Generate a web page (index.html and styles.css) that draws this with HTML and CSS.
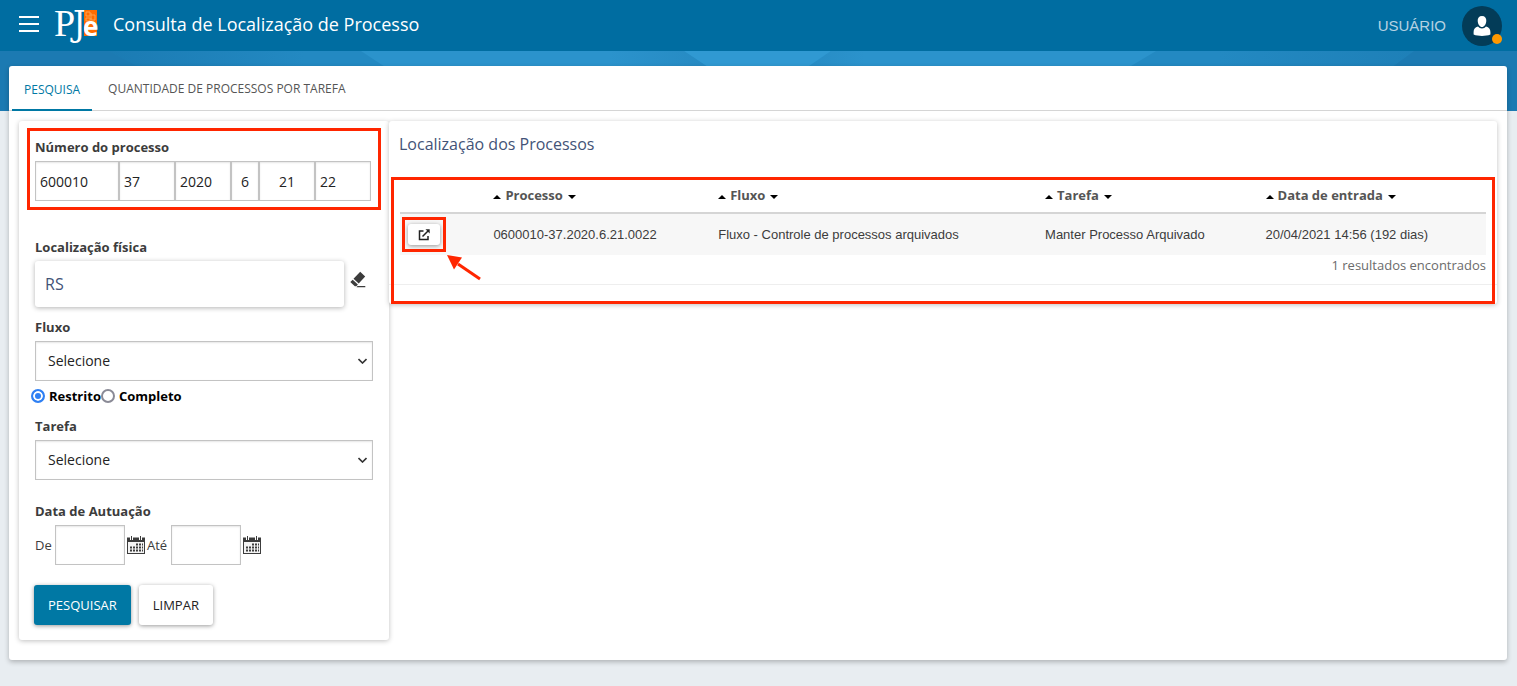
FILE: index.html
```html
<!DOCTYPE html>
<html lang="pt-BR">
<head>
<meta charset="utf-8">
<title>Consulta de Localização de Processo</title>
<link rel="stylesheet" href="styles.css">
</head>
<body>
<header class="topbar">
  <button class="menu-button" type="button" aria-label="Menu"><span></span><span></span><span></span></button>
  <svg class="logo" width="48" height="50" viewBox="-1 -7 48 50" role="img" aria-label="PJe">
    <rect x="30" y="2" width="13" height="26" fill="#ff6c00"/>
    <path d="M32 4h4v4h-4zM37 7h4v5h-4zM32 10h4v3h-4zM36 6h2M36 11h2" fill="none" stroke="#ffa04d"/>
    <text class="logo-p" x="0" y="28">P</text>
    <text class="logo-j" x="19" y="28">J</text>
    <text class="logo-e" x="29" y="28">e</text>
  </svg>
  <h1 class="page-title">Consulta de Localização de Processo</h1>
  <span class="user-name">USUÁRIO</span>
  <button class="avatar" type="button" aria-label="Perfil do usuário">
    <svg width="18" height="20" viewBox="0 0 18 20" aria-hidden="true">
      <path d="M9 0c3 0 4.500 2 4.300 5C13 8.500 11.200 11 9 11S5 8.500 4.700 5C4.500 2 6 0 9 0zM5 10.500c1 1.300 2.400 2 4 2s3-.7 4-2c3 .7 4.400 2.500 4.400 5.500v2.600C15 19.700 12 20 9 20s-6-.3-8.400-1.400V16c0-3 1.400-4.800 4.400-5.500z" fill="#fff"/>
    </svg>
    <span class="status"></span>
  </button>
</header>
<div class="hero">
  <svg class="hero-art" viewBox="0 0 1517 60" preserveAspectRatio="none" aria-hidden="true">
    <defs>
      <linearGradient id="a"><stop offset="0" stop-color="#1b7bb3"/><stop offset=".15" stop-color="#2389c2"/><stop offset=".85" stop-color="#2389c2"/><stop offset="1" stop-color="#1e80b8"/></linearGradient>
      <linearGradient id="b"><stop offset="0" stop-color="#2b93cc"/><stop offset=".6" stop-color="#2b93cc"/><stop offset="1" stop-color="#2384bc"/></linearGradient>
      <linearGradient id="c"><stop offset="0" stop-color="#2384bc"/><stop offset=".3" stop-color="#2b93cc"/><stop offset="1" stop-color="#2b93cc"/></linearGradient>
    </defs>
    <path d="M0 0h1517v60H0z" fill="#1c7ab2"/>
    <path d="M108 0h1306l-82 60H224z" fill="url(#a)"/>
    <path d="M361 0h323l90 60H452z" fill="url(#b)"/>
    <path d="M831 0h325l-100 60H740z" fill="url(#c)"/>
    <path d="M684 0h147l-88 60h31z" fill="#3099d2"/>
  </svg>
</div>
<main class="card">
  <nav class="tabs">
    <a class="tab tab-active" href="#pesquisa">PESQUISA</a>
    <a class="tab" href="#quantidade">QUANTIDADE DE PROCESSOS POR TAREFA</a>
  </nav>
  <div class="columns">
    <form class="panel search">
      <div class="process-number">
        <fieldset class="field">
          <legend class="label">Número do processo</legend>
          <div class="number-row">
            <input class="input n-seq" type="text" value="600010" aria-label="Número sequencial">
            <input class="input n-mid" type="text" value="37" aria-label="Dígito verificador">
            <input class="input n-mid" type="text" value="2020" aria-label="Ano">
            <input class="input n-small" type="text" value="6" aria-label="Ramo da justiça">
            <input class="input n-mid centered" type="text" value="21" aria-label="Tribunal">
            <input class="input n-mid" type="text" value="22" aria-label="Origem">
          </div>
        </fieldset>
        <span class="mark mark-number"></span>
      </div>
      <div class="field place">
        <label class="label" for="local">Localização física</label>
        <div class="place-row">
          <input class="place-input" id="local" type="text" value="RS">
          <button class="icon-button eraser" type="button" aria-label="Limpar localização">
            <svg width="16" height="17" viewBox="0 0 16 17" aria-hidden="true"><path d="M10.200.8l5 4.800-6.500 7L3.500 7.800zM2.700 8.700l5.200 4.900-1.500 1.600H4.800L.3 11.100zM7.500 15h7.800v1.200H6.500z" fill="#3c3c3c"/></svg>
          </button>
        </div>
      </div>
      <div class="field flow">
        <label class="label" for="fluxo">Fluxo</label>
        <div class="select-wrap">
          <select class="input select" id="fluxo"><option>Selecione</option></select>
          <svg class="chevron" width="9" height="6" viewBox="0 0 9 6" aria-hidden="true"><path d="M.5 1l4 4 4-4" fill="none" stroke="#333" stroke-width="1.600"/></svg>
        </div>
      </div>
      <div class="radios">
        <label class="radio-label"><input class="radio" type="radio" name="modo" checked>Restrito</label>
        <label class="radio-label"><input class="radio" type="radio" name="modo">Completo</label>
      </div>
      <div class="field task">
        <label class="label" for="tarefa">Tarefa</label>
        <div class="select-wrap">
          <select class="input select" id="tarefa"><option>Selecione</option></select>
          <svg class="chevron" width="9" height="6" viewBox="0 0 9 6" aria-hidden="true"><path d="M.5 1l4 4 4-4" fill="none" stroke="#333" stroke-width="1.600"/></svg>
        </div>
      </div>
      <fieldset class="field dates">
        <legend class="label">Data de Autuação</legend>
        <svg class="symbols" aria-hidden="true"><symbol id="calendar" viewBox="0 0 18 18">
          <rect x=".5" y="3.500" width="17" height="14" fill="#f4f4f4" stroke="#3c3c3c"/>
          <path d="M0 1.500h18V6H0z" fill="#3c3c3c"/>
          <path d="M4.500 0v4M13.500 0v4" stroke="#fff" stroke-width="3"/>
          <path d="M4.500 0v4M13.500 0v4" stroke="#3c3c3c"/>
          <path d="M9 8.500h7M3 11.500h13M3 14.500h13" stroke="#3c3c3c" stroke-width="2" stroke-dasharray="2 1"/>
        </symbol></svg>
        <div class="date-row">
          <label class="date-from" for="de">De</label>
          <input class="input date" id="de" type="text">
          <button class="icon-button" type="button" aria-label="Calendário inicial"><svg width="18" height="18"><use href="#calendar"/></svg></button>
          <label class="date-to" for="ate">Até</label>
          <input class="input date" id="ate" type="text">
          <button class="icon-button" type="button" aria-label="Calendário final"><svg width="18" height="18"><use href="#calendar"/></svg></button>
        </div>
      </fieldset>
      <div class="actions">
        <button class="button primary" type="button">PESQUISAR</button>
        <button class="button" type="button">LIMPAR</button>
      </div>
    </form>
    <section class="panel results">
      <h2 class="results-title">Localização dos Processos</h2>
      <div class="results-body">
        <table class="table">
          <colgroup><col class="c-open"><col class="c-process"><col class="c-flow"><col class="c-task"><col class="c-date"></colgroup>
          <thead>
            <tr>
              <td></td>
              <th><span class="up"></span>Processo<span class="down"></span></th>
              <th><span class="up"></span>Fluxo<span class="down"></span></th>
              <th><span class="up"></span>Tarefa<span class="down"></span></th>
              <th><span class="up"></span>Data de entrada<span class="down"></span></th>
            </tr>
          </thead>
          <tbody>
            <tr>
              <td>
                <div class="open-wrap">
                  <button class="open-button" type="button" aria-label="Abrir processo">
                    <svg width="12" height="12" viewBox="0 0 12 12" aria-hidden="true"><path d="M5.500 2H1.500v8.500H10V7M4.500 7.500L10 2" fill="none" stroke="#222" stroke-width="1.500"/><path d="M7.500.3h4.200v4.200z" fill="#222"/></svg>
                  </button>
                  <span class="mark mark-open"></span>
                  <svg class="arrow" width="36" height="28" viewBox="0 0 36 28" aria-hidden="true"><path d="M12 9l22 15" stroke="#ff2600" stroke-width="3"/><path d="M1 0l15 2.500-8 12z" fill="#ff2600"/></svg>
                </div>
              </td>
              <td>0600010-37.2020.6.21.0022</td>
              <td>Fluxo - Controle de processos arquivados</td>
              <td>Manter Processo Arquivado</td>
              <td>20/04/2021 14:56 (192 dias)</td>
            </tr>
          </tbody>
        </table>
        <p class="count">1 resultados encontrados</p>
        <div class="results-footer"></div>
        <span class="mark mark-results"></span>
      </div>
    </section>
  </div>
</main>
</body>
</html>
```

FILE: styles.css
```css
* { box-sizing: border-box; }

body {
  margin: 0;
  background: #e8edf1;
  color: #3c3c3c;
  font: 13px/20px "Open Sans", "Noto Sans", sans-serif;
}

button, input, select { font: inherit; color: inherit; }
button { cursor: pointer; }
svg { display: block; }
fieldset { border: 0; padding: 0; margin: 0; min-width: 0; }
legend { padding: 0; }

/* Top bar */
.topbar {
  display: flex;
  align-items: center;
  height: 51px;
  padding: 0 15px 0 19px;
  background: #006da1;
  color: #fff;
}
.menu-button {
  display: flex;
  flex-direction: column;
  gap: 5px;
  width: 20px;
  padding: 0;
  margin-bottom: 3px;
  border: 0;
  background: none;
}
.menu-button span { height: 2px; background: #fff; }
.logo { margin-left: 14px; overflow: visible; }
.logo text { fill: #fff; }
.logo-p { font: 38px "Liberation Serif", serif; }
.logo-j { font: 35px "DejaVu Serif Condensed", "DejaVu Serif", serif; }
.logo-e { font: bold 26px "Open Sans", sans-serif; }
.page-title {
  margin: 0 0 3px 12px;
  font-size: 18px;
  line-height: 24px;
  font-weight: 400;
}
.user-name {
  margin-left: auto;
  color: #b5d2e2;
  font: 15px/20px "Liberation Sans", Arial, sans-serif;
}
.avatar {
  position: relative;
  display: grid;
  place-items: center;
  width: 40px;
  height: 40px;
  margin-left: 16px;
  padding: 0;
  border: 0;
  border-radius: 50%;
  background: #033c58;
}
.status {
  position: absolute;
  right: 0;
  bottom: 2px;
  width: 10px;
  height: 10px;
  border-radius: 50%;
  background: #ff9800;
}

.hero { height: 60px; }
.hero-art { width: 100%; height: 60px; }

/* Main card */
.card {
  position: relative;
  margin: -45px 10px 26px 9px;
  border-radius: 3px;
  background: #fff;
  box-shadow: 0 2px 5px rgba(0, 0, 0, .25);
}
.tabs {
  display: flex;
  height: 45px;
  padding-left: 3px;
  border-bottom: 1px solid #d5d5d5;
  font-size: 12px;
}
.tab {
  height: 45px;
  padding: 13px 16px;
  color: #555;
  text-decoration: none;
}
.tab-active {
  padding: 14px 12px 9px;
  border-bottom: 2px solid #0078a4;
  color: #0078a4;
}
.columns {
  display: flex;
  align-items: flex-start;
  padding: 10px 10px 20px;
}
.panel {
  border-radius: 3px;
  background: #fff;
  box-shadow: 0 1px 5px rgba(0, 0, 0, .25);
}

/* Search form */
.search { flex: 0 0 370px; padding: 16px 16px 15px; }
.label { display: block; margin-bottom: 4px; font-weight: 700; }
.input {
  height: 40px;
  padding: 0 4px;
  border: 1px solid #c3c3c3;
  border-radius: 0;
  background: #fff;
  box-shadow: inset 0 1px 2px rgba(0, 0, 0, .1);
  color: #222;
  font-size: 14px;
}
.process-number { position: relative; }
.number-row { display: flex; }
.n-seq { width: 84px; }
.n-mid { width: 56px; }
.n-small { width: 28px; padding: 0; text-align: center; }
.centered { text-align: center; }
.place { margin-top: 36px; }
.place-row { display: flex; gap: 6px; align-items: flex-start; }
.place-input {
  flex: 1;
  min-width: 0;
  height: 46px;
  padding: 0 10px;
  border: 0;
  border-radius: 3px;
  box-shadow: 0 1px 5px rgba(0, 0, 0, .3);
  color: #435377;
  font-size: 16px;
}
.icon-button { padding: 0; border: 0; background: none; }
.eraser { margin: 10px 7px 0 0; }
.flow, .task { margin-top: 10px; }
.select-wrap { position: relative; }
.select {
  display: block;
  width: 100%;
  padding: 0 12px;
  appearance: none;
}
.chevron {
  position: absolute;
  right: 6px;
  top: 17px;
  pointer-events: none;
}
.radios {
  display: flex;
  margin: 5px 0 0 -4px;
  color: #000;
  font-weight: 700;
}
.radio-label { display: flex; align-items: center; gap: 4px; }
.radio {
  appearance: none;
  width: 14px;
  height: 14px;
  margin: 0;
  border: 2px solid #8a8a96;
  border-radius: 50%;
  background: #fff;
}
.radio:checked {
  border-color: #2f80f3;
  background: #2f80f3;
  box-shadow: inset 0 0 0 2px #fff;
}
.dates { margin-top: 21px; }
.symbols { position: absolute; width: 0; height: 0; }
.date-row { display: flex; align-items: center; }
.date-from { width: 20px; }
.date-to { width: 24px; }
.date { width: 70px; }
.date-row .icon-button { margin: 0 2px; }
.actions { display: flex; gap: 8px; margin: 20px 0 0 -1px; }
.button {
  height: 40px;
  padding: 0 14px;
  border: 0;
  border-radius: 3px;
  background: #fff;
  box-shadow: 0 1px 4px rgba(0, 0, 0, .4);
  color: #222;
  font-size: 13px;
}
.primary { background: #0078a4; color: #fff; }

/* Results */
.results { flex: 1; min-width: 0; }
.results-title {
  margin: 0;
  padding: 12px 10px 23px;
  color: #435377;
  font-size: 16px;
  line-height: 22px;
  font-weight: 400;
}
.results-body { position: relative; }
.table {
  width: calc(100% - 22px);
  margin: 0 11px;
  border-collapse: collapse;
  table-layout: fixed;
}
.table th {
  color: #555;
  text-align: left;
  white-space: nowrap;
}
.table th, .table td { padding: 0; }
.table thead tr { height: 35px; border-bottom: 2px solid #d5d5d5; }
.table tbody tr { height: 42px; background: #f7f7f7; }
.table tbody td { font: 13px/20px "Liberation Sans", Arial, sans-serif; }
.c-open { width: 8.600%; }
.c-process { width: 20.700%; }
.c-flow { width: 30.100%; }
.c-task { width: 20.300%; }
.c-date { width: 20.300%; }
.up, .down {
  display: inline-block;
  vertical-align: middle;
  border: 4px solid transparent;
}
.up { margin-right: 4px; border-top: 0; border-bottom-color: #000; }
.down { margin-left: 5px; border-bottom: 0; border-top-color: #000; }
.open-wrap { position: relative; width: 32px; margin-left: 8px; }
.open-button {
  display: grid;
  place-items: center;
  width: 32px;
  height: 21px;
  padding: 0;
  border: 0;
  border-radius: 3px;
  background: #fff;
  box-shadow: 0 1px 4px rgba(0, 0, 0, .4);
}
.count { margin: 0; padding: 0 11px 9px; color: #6b6b6b; text-align: right; }
.results-footer { height: 20px; border-top: 1px solid #eee; }

/* Red annotations */
.mark { position: absolute; border: 3px solid #ff2600; pointer-events: none; }
.mark-number { inset: -9px -8px; }
.mark-open { inset: -7px -6px; }
.mark-results { inset: -1px 2px 0; }
.arrow { position: absolute; left: 38px; top: 31px; }
```
